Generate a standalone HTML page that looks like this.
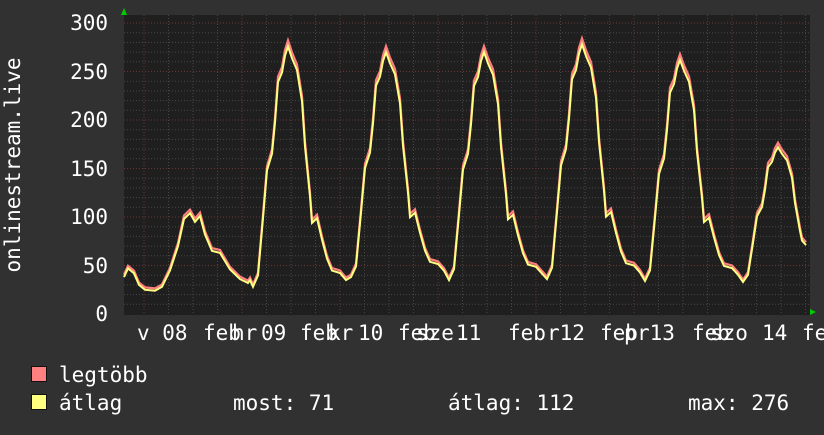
<!DOCTYPE html><html><head><meta charset="utf-8"><style>
body{margin:0;background:#313131;width:824px;height:430px;overflow:hidden}
svg text{font-family:"DejaVu Sans Mono","Liberation Mono",monospace;fill:#fff;font-size:21px}
</style></head><body>
<svg id="s" width="824" height="430" xmlns="http://www.w3.org/2000/svg">
<rect x="0" y="0" width="824" height="430" fill="#313131"/>
<rect x="124" y="15" width="686" height="300" fill="#1f1f1f"/>
<g id="grid"></g>
<path id="red" fill="none" stroke="#ff7f7f" stroke-width="2.2"/>
<path id="yel" fill="none" stroke="#ffff80" stroke-width="2"/>
<polygon points="121,15 127,15 124,8" fill="#00cc00"/>
<polygon points="810,309 810,315 816,312" fill="#00cc00"/>
<text x="108" y="30" text-anchor="end">300</text>
<text x="108" y="79" text-anchor="end">250</text>
<text x="108" y="127" text-anchor="end">200</text>
<text x="108" y="176" text-anchor="end">150</text>
<text x="108" y="224" text-anchor="end">100</text>
<text x="108" y="273" text-anchor="end">50</text>
<text x="108" y="321" text-anchor="end">0</text>
<text transform="translate(20,165) rotate(-90)" text-anchor="middle">onlinestream.live</text>
<text x="137" y="340">v 08</text>
<text x="203" y="340">feb</text><text x="232" y="340">hr</text><text x="261" y="340">09</text>
<text x="300" y="340">feb</text><text x="328" y="340">kr</text><text x="358" y="340">10</text>
<text x="398" y="340">feb</text><text x="416" y="340">sze</text><text x="456" y="340">11</text>
<text x="508" y="340">feb</text><text x="547" y="340">r12</text>
<text x="600" y="340">feb</text><text x="624" y="340">p</text><text x="637" y="340">r13</text>
<text x="692" y="340">feb</text><text x="710" y="340">szo</text><text x="762" y="340">14</text>
<text x="802" y="340">fe</text>
<rect x="31.5" y="366.5" width="15" height="15" fill="#ff8080" stroke="#111"/>
<rect x="31.5" y="394.5" width="15" height="15" fill="#ffff80" stroke="#111"/>
<text x="59" y="382">legtöbb</text>
<text x="59" y="410">átlag</text>
<text x="233" y="410">most: 71</text>
<text x="448" y="410">átlag: 112</text>
<text x="688" y="410">max: 276</text>
</svg>
<script>
var g=document.getElementById("grid"),h="";
function Y(v){return 314-v*0.97;}
for(var v=10;v<=300;v+=10){var y=Y(v).toFixed(1);var maj=v%50==0;
h+='<line x1="124" x2="810" y1="'+y+'" y2="'+y+'" stroke="'+(maj?'#6a3434':'#474747')+'" stroke-dasharray="1,2"/>';}
for(var i=-1;i<28;i++){var x=144+24.5*i;if(x<=124||x>=810)continue;var maj=(i%4==0);
h+='<line y1="15" y2="315" x1="'+x.toFixed(1)+'" x2="'+x.toFixed(1)+'" stroke="'+(maj?'#6a3434':'#474747')+'" stroke-dasharray="1,2"/>';}
g.innerHTML=h;
var pts=[[124,38],[128,47],[134,42],[139,30],[145,25],[155,24],[162,28],[170,45],[178,70],[184,98],[190,104],[195,95],[200,101],[205,82],[212,65],[220,63],[230,46],[240,36],[248,32],[250,35]];
var pat=[[11,-9],[16,0.04],[21,0.28],[25,0.48],[30,0.55],[33,0.68],[36,0.85],[40,0.89],[43,0.96],[46,1],[50,0.95],[55,0.9],[60,0.77],[63,0.58],[68,0.37],[70,0.26],[75,0.28],[80,0.19],[85,0.11],[90,0.06],[98,0.05],[104,0.02]];
var days=[[242,276,30],[340,270,40],[438,270,37],[536,278,38],[634,262,36],[732,172,35]];
days.forEach(function(d){pat.forEach(function(p){var x=d[0]+p[0];if(x>806)return;var v;
if(p[1]==-9)v=d[2]-2;else v=d[2]+(d[1]-d[2])*p[1];
if(d[0]==732&&p[0]>=63)v=Math.max(v,71+(806-x)*1.2);pts.push([x,v]);});});
pts.push([806,71]);
var a="",b="";pts.forEach(function(p,i){a+=(i?"L":"M")+p[0]+","+Y(p[1]).toFixed(1);b+=(i?"L":"M")+p[0]+","+Y(p[1]*1.015+2).toFixed(1);});
document.getElementById("yel").setAttribute("d",a);document.getElementById("red").setAttribute("d",b);
</script>
</body></html>
